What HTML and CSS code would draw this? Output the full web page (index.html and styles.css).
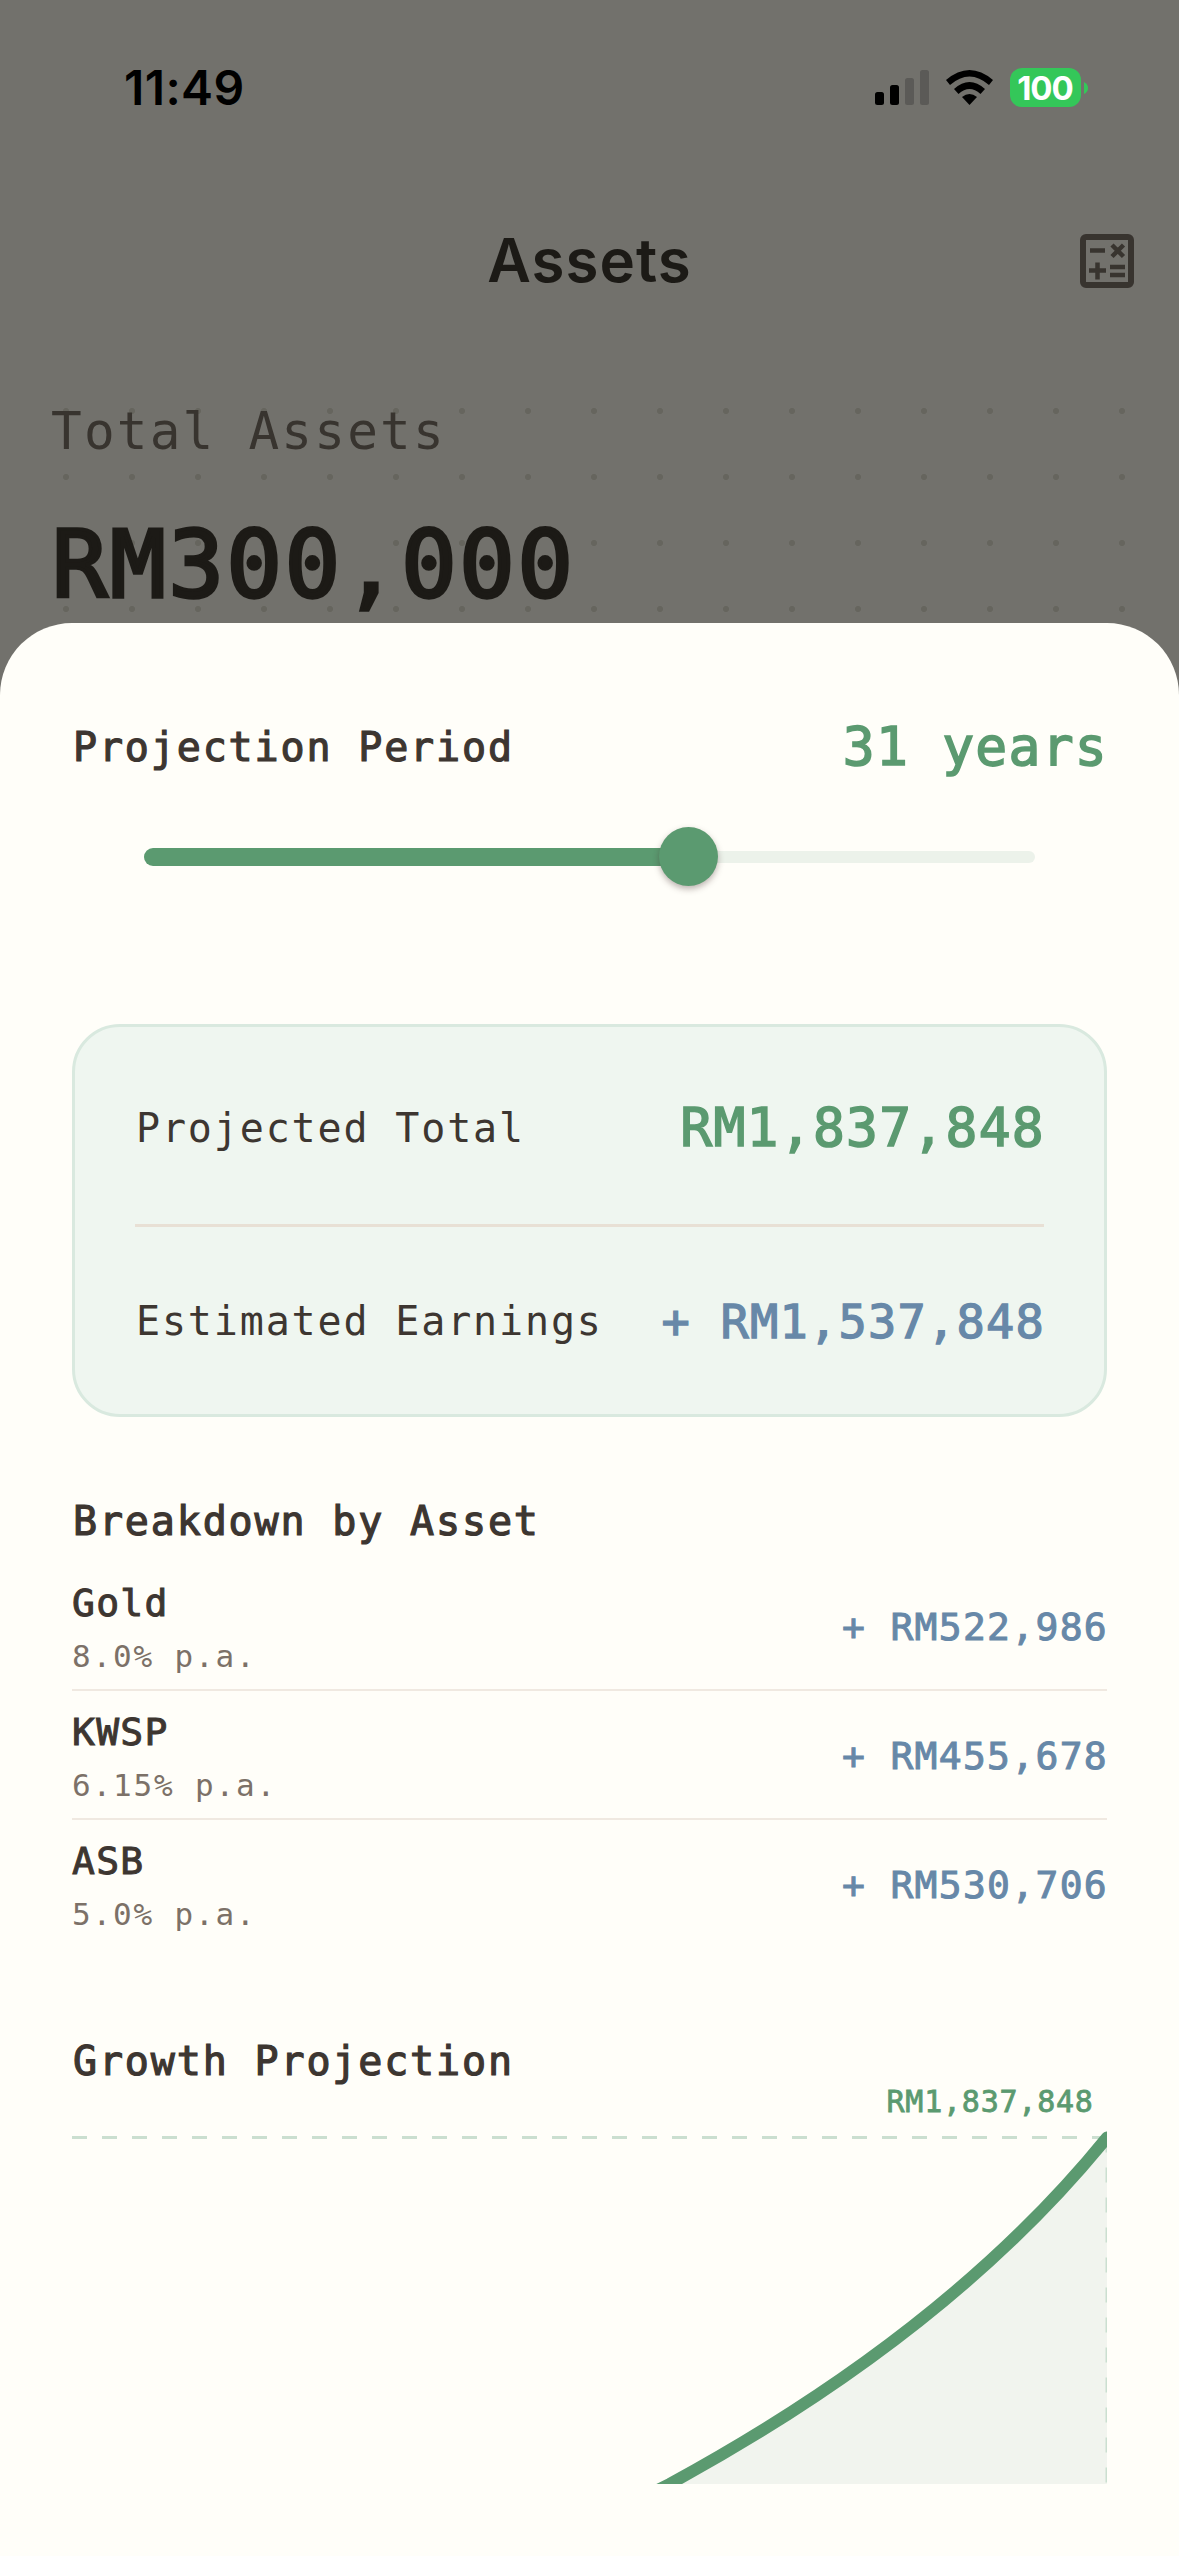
FILE: index.html
```
<!DOCTYPE html>
<html lang="en">
<head>
<meta charset="utf-8">
<title>Assets</title>
<link rel="stylesheet" href="styles.css">
</head>
<body>
<main class="phone">
  <section class="backdrop">
    <header class="status">
      <span class="clock">11:49</span>
      <svg class="status-icons" width="216" height="40" viewBox="0 0 216 40">
        <rect x="0" y="24" width="9" height="13" rx="2.5"/>
        <rect x="15" y="17" width="9" height="20" rx="2.5"/>
        <rect x="30" y="10" width="9" height="27" rx="2.5" fill="#5b5a57"/>
        <rect x="45" y="2" width="9" height="35" rx="2.5" fill="#5b5a57"/>
        <path d="M71 12Q94.500-8 118 12l-4 5Q94.500 0 75 17Z"/>
        <path d="M79 21Q94.500 7 110 21l-4.500 5Q94.500 16 83.500 26Z"/>
        <path d="M87 29Q94.500 23 102 29l-7.500 8Z"/>
        <rect x="135" y="0" width="71" height="39" rx="12" fill="#34c759"/>
        <path d="M209 14q4 2 4 6t-4 6Z" fill="#34c759"/>
        <text x="170" y="31.500" class="battery-text">100</text>
      </svg>
    </header>
    <nav class="nav">
      <span></span>
      <h1 class="title">Assets</h1>
      <svg class="calc" width="54" height="54" viewBox="0 0 54 54">
        <rect x="3" y="3" width="48" height="48" rx="3"/>
        <path d="M10 16.500h15M32 11l11.500 11.500M43.500 11L32 22.500M9 36.500h17M17.500 28.500v17M30 33h15M30 41h15"/>
      </svg>
    </nav>
    <div class="total">
      <p class="total-label">Total Assets</p>
      <p class="total-value">RM300,000</p>
    </div>
  </section>
  <section class="sheet">
    <div class="period">
      <h2 class="heading">Projection Period</h2>
      <span class="amount green">31 years</span>
    </div>
    <div class="slider"><div class="track"></div><div class="fill"></div><div class="knob"></div></div>
    <div class="card">
      <div class="card-row"><span class="card-label">Projected Total</span><span class="amount green">RM1,837,848</span></div>
      <div class="card-row"><span class="card-label">Estimated Earnings</span><span class="earnings">+ RM1,537,848</span></div>
    </div>
    <h2 class="heading breakdown">Breakdown by Asset</h2>
    <ul class="assets">
      <li class="asset"><div><p class="name">Gold</p><p class="rate">8.0% p.a.</p></div><span class="gain">+ RM522,986</span></li>
      <li class="asset"><div><p class="name">KWSP</p><p class="rate">6.15% p.a.</p></div><span class="gain">+ RM455,678</span></li>
      <li class="asset"><div><p class="name">ASB</p><p class="rate">5.0% p.a.</p></div><span class="gain">+ RM530,706</span></li>
    </ul>
    <h2 class="heading growth">Growth Projection</h2>
    <svg class="chart" width="1035" height="404" viewBox="0 0 1035 404">
      <path d="M597.600 404Q877 252 1035 57.500V404Z" fill="#f1f4ee"/>
      <path d="M0 57.500H1035" class="dash"/>
      <path d="M1035 57.500V404" class="dash"/>
      <path d="M570 418L597.600 404Q877 252 1035 57.500" class="curve"/>
      <text x="814.500" y="31.500" class="chart-label">RM1,837,848</text>
    </svg>
  </section>
</main>
</body>
</html>
```
FILE: styles.css
```
* { box-sizing: border-box; }
body { margin: 0; background: #fffef9; }
h1, h2, p, ul { margin: 0; padding: 0; font-weight: 400; }
.phone {
  width: 1179px;
  height: 2556px;
  overflow: hidden;
  background: #72716c;
  font-family: "DejaVu Sans Mono", monospace;
  color: #3d3631;
  white-space: nowrap;
}
.backdrop { height: 623px; overflow: hidden; }
.status {
  display: flex;
  justify-content: space-between;
  align-items: center;
  height: 176px;
  padding: 0 88px 0 124px;
}
.clock { font: 600 48px/60px Inter, sans-serif; letter-spacing: .4px; color: #000; }
.battery-text { font: 700 33px Inter, sans-serif; letter-spacing: -1px; fill: #fff; text-anchor: middle; }
.nav {
  display: grid;
  grid-template-columns: 1fr auto 1fr;
  align-items: center;
  height: 170px;
  padding: 0 45px;
}
.title { margin-bottom: 2px; font: 600 60px/72px Inter, sans-serif; letter-spacing: 1px; color: #1c1a16; }
.calc { justify-self: end; fill: none; stroke: #38342f; stroke-width: 6; }
.calc path { stroke-width: 4.5; }
.total {
  height: 277px;
  margin: 32px 0 0 33px;
  padding: 16px 18px;
  background: radial-gradient(circle at 33px 33px, #66655e 2.700px, transparent 3.400px) 0 0 / 66px 66px;
}
.total-label { font-size: 51px; line-height: 76px; letter-spacing: 2.200px; color: #38342f; }
.total-value { margin-top: 36px; padding-left: 1px; font-size: 92px; line-height: 120px; letter-spacing: 2.800px; color: #1c1a16; -webkit-text-stroke: 3.500px; }
.sheet {
  height: 1933px;
  padding: 84px 72px 0;
  border-radius: 72px 72px 0 0;
  background: #fffef9;
}
.period, .card-row, .asset { display: flex; justify-content: space-between; align-items: center; }
.period { height: 80px; }
.heading { padding-left: 1px; font-size: 40px; line-height: 60px; letter-spacing: 1.850px; -webkit-text-stroke: 1.200px; }
.amount { margin-right: -1px; font-size: 53px; line-height: 76px; letter-spacing: 1.250px; -webkit-text-stroke: 1.600px; }
.green { color: #5b9a70; }
.slider { display: grid; align-items: center; height: 59px; margin: 40px 72px 0; }
.slider > * { grid-area: 1 / 1; }
.track { height: 12px; border-radius: 6px; background: #ecf2ea; }
.fill { width: 545px; height: 18px; border-radius: 9px; background: #5b9a70; }
.knob { width: 59px; height: 59px; margin-left: 515px; border-radius: 50%; background: #5b9a70; box-shadow: 0 3px 6px rgba(60, 40, 40, .35); }
.card {
  height: 393px;
  margin-top: 138px;
  padding: 0 60px;
  border: 3px solid #d9e9df;
  border-radius: 48px;
  background: #eff6f0;
}
.card-row { height: 197px; padding-top: 4px; }
.card-row + .card-row { height: 190px; padding-top: 1px; border-top: 3px solid #e8e0d5; }
.card-label { padding-left: 1px; font-size: 40px; letter-spacing: 1.850px; }
.earnings { margin-right: -1px; font-size: 47px; letter-spacing: 1.200px; color: #6788a8; -webkit-text-stroke: 1.300px; }
.breakdown { margin-top: 74px; }
.assets { margin-top: 15px; list-style: none; }
.asset { height: 123px; padding-top: 1px; }
.asset + .asset { height: 129px; padding-top: 4px; border-top: 2px solid #f0e9e1; }
.name { font-size: 38px; line-height: 50px; letter-spacing: 1.300px; -webkit-text-stroke: 1px; }
.rate { margin-top: 6px; font-size: 31px; line-height: 44px; letter-spacing: 1.850px; color: #7c7168; }
.gain { margin: 0 -1px 2px 0; font-size: 38px; letter-spacing: 1.300px; color: #6788a8; -webkit-text-stroke: 1px; }
.growth { margin-top: 84px; }
.chart { display: block; margin-top: -11px; }
.dash { fill: none; stroke: #cbdfd0; stroke-width: 3; stroke-dasharray: 15 15; }
.curve { fill: none; stroke: #5b9a70; stroke-width: 12; stroke-linecap: round; }
.chart-label { font-size: 30px; letter-spacing: .77px; fill: #5b9a70; stroke: #5b9a70; stroke-width: .8; }
```
